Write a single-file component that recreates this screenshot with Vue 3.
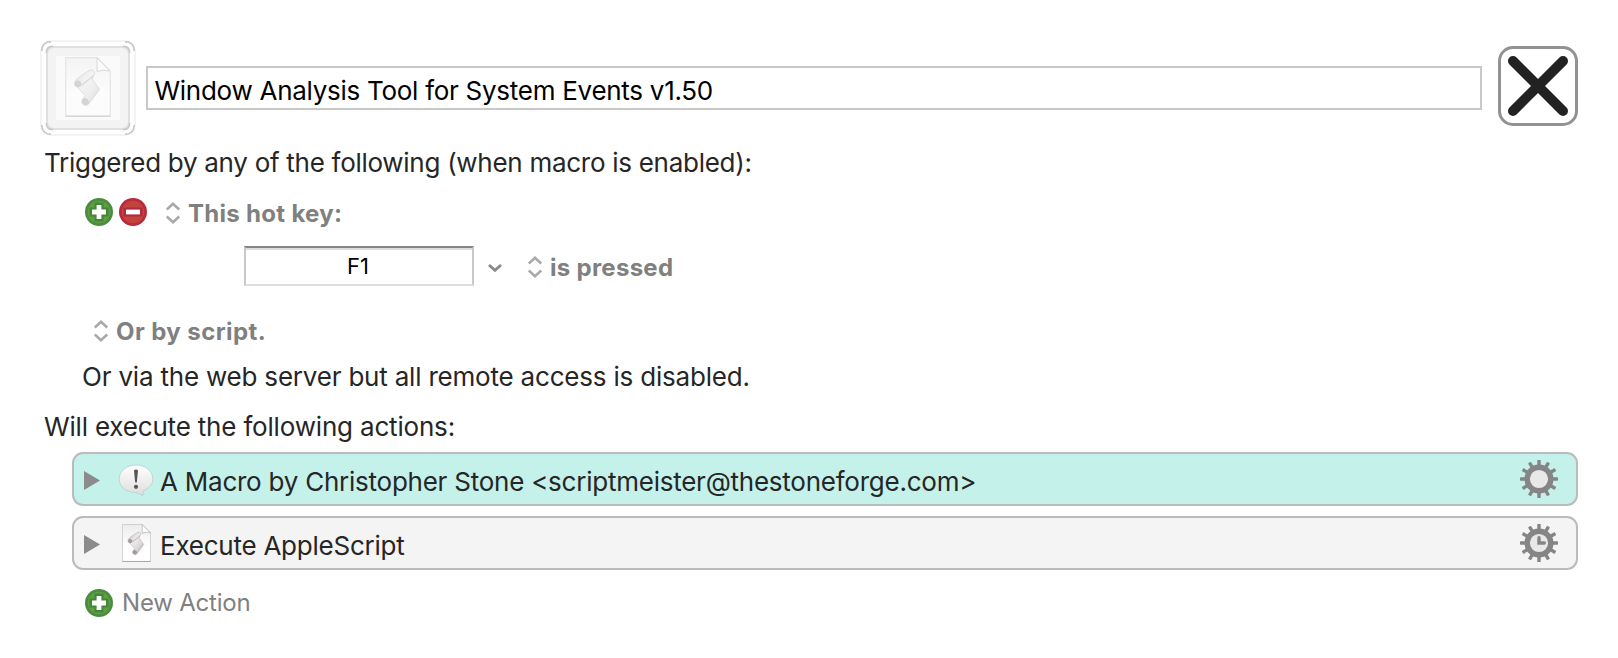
<script setup>
const teeth = Array.from({ length: 12 }, (_, i) => i * 30)
const corners = [0, 90, 180, 270]
const actions = [
  { id: 'note', title: 'A Macro by Christopher Stone <scriptmeister@thestoneforge.com>' },
  { id: 'applescript', title: 'Execute AppleScript' },
]
</script>

<template>
  <main class="editor">
    <svg width="0" height="0" class="defs">
      <defs>
        <linearGradient id="bubble" x1="0" y1="0" x2="0" y2="1">
          <stop offset="0" stop-color="#ffffff" /><stop offset="1" stop-color="#dedede" />
        </linearGradient>
        <linearGradient id="scroll" x1="0" y1="0" x2="1" y2="1">
          <stop offset="0.1" stop-color="#d0cccf" /><stop offset="0.4" stop-color="#ece9eb" /><stop offset="0.65" stop-color="#dedadc" /><stop offset="0.85" stop-color="#bbb7b9" />
        </linearGradient>
        <linearGradient id="sheet" x1="0" y1="0" x2="0" y2="1">
          <stop offset="0" stop-color="#ececec" /><stop offset="0.6" stop-color="#ffffff" />
        </linearGradient>
        <symbol id="scriptdoc" viewBox="0 0 46 60">
          <path d="M.7 .7H32L45.3 14V59.3H.7Z" fill="url(#sheet)" stroke="#c6c6c6" stroke-width="1.2" />
          <path d="M.7 59.3H45.3" stroke="#a2a2a2" stroke-width="1.4" />
          <path d="M32 .7 45 14Q38 12 32 14.500Z" fill="#fdfdfd" stroke="#a8a8a8" stroke-width="1" />
          <path d="M13 30.500Q9 29 9.500 26 10 23 13 21L24 13.500Q28 11.500 30 15L27 22 34.500 32.500 24 46.500Q21 50 17.500 47 15.500 44 19 40.500L20 38.500Z" fill="url(#scroll)" stroke="#aaa6a8" stroke-width=".8" />
          <path d="M16.500 28.500 28 19" stroke="#a9a5a7" stroke-width="1.200" />
          <path d="M9.700 27Q10 23 13.500 23.500 17.500 24.500 16 29L13 30.500Q10 30 9.700 27Z" fill="#a09c9e" />
          <path d="M17 46Q16 42 19.500 41 24 41 24 46.500 20 50 17 46Z" fill="#a09c9e" />
        </symbol>
        <symbol id="plus" viewBox="0 0 28 28">
          <circle cx="14" cy="14" r="14" fill="#4a8d3e" /><circle cx="14" cy="14" r="11.300" fill="#5f9f40" />
          <path d="M14 4.500V23.500M4.500 14H23.500" stroke="#43883a" stroke-width="9" />
          <path d="M14 7V21M7 14H21" stroke="#fff" stroke-width="4.800" />
        </symbol>
        <symbol id="updown" viewBox="0 0 14 22">
          <path d="M.8 7.500 7 1.800 13.200 7.500" fill="none" stroke="#a9a9a9" stroke-width="2.600" />
          <path d="M.8 14.500 7 20.200 13.200 14.500" fill="none" stroke="#a9a9a9" stroke-width="2.600" />
        </symbol>
      </defs>
    </svg>

    <header class="head">
      <svg class="well" width="96" height="96" viewBox="0 0 96 96">
        <rect x="1" y="1" width="94" height="94" rx="11" fill="#fff" stroke="#f3f3f3" stroke-width="2" />
        <rect x="7" y="7" width="82" height="82" rx="7" fill="#f3f3f3" stroke="#e0e0e0" stroke-width="2" />
        <rect x="16" y="16" width="64" height="64" fill="#fafafa" />
        <g v-for="c in corners" :key="c" fill="none" stroke="#c6c6c6" stroke-width="1.500" :transform="`rotate(${c} 48 48)`">
          <path d="M1.800 11Q1.800 1.800 11 1.800" /><path d="M6.300 13Q6.300 6.300 13 6.300" />
        </g>
        <use class="doc" href="#scriptdoc" x="25" y="17" width="46" height="60" />
      </svg>
      <div class="name">Window Analysis Tool for System Events v1.50</div>
      <div class="close">
        <svg width="74" height="74" viewBox="0 0 74 74"><path d="M12 12 62 62M62 12 12 62" stroke="#222" stroke-width="10" stroke-linecap="round" /></svg>
      </div>
    </header>

    <p class="line trig">Triggered by any of the following (when macro is enabled):</p>

    <div class="row hot">
      <svg width="28" height="28"><use href="#plus" /></svg>
      <svg class="minus" width="28" height="28" viewBox="0 0 28 28">
        <circle cx="14" cy="14" r="14" fill="#b72c3d" /><circle cx="14" cy="14" r="11.300" fill="#c5433f" />
        <path d="M4.500 14H23.500" stroke="#b02a40" stroke-width="9" /><path d="M7 14H21" stroke="#fff" stroke-width="4.800" />
      </svg>
      <svg class="ud" width="14" height="22"><use href="#updown" /></svg>
      <span class="menu hotkey">This hot key:</span>
    </div>

    <div class="row keyrow">
      <div class="key">F1</div>
      <svg class="chev" width="14" height="10" viewBox="0 0 14 10"><path d="M1 2 7 7.300 13 2" fill="none" stroke="#8a8a8a" stroke-width="3" /></svg>
      <svg class="ud" width="14" height="22"><use href="#updown" /></svg>
      <span class="menu pressed">is pressed</span>
    </div>

    <div class="row byscript">
      <svg class="ud" width="14" height="22"><use href="#updown" /></svg>
      <span class="menu orby">Or by script.</span>
    </div>

    <p class="line via">Or via the web server but all remote access is disabled.</p>
    <p class="line will">Will execute the following actions:</p>

    <section class="actions">
      <div v-for="a in actions" :key="a.id" class="action" :class="a.id">
        <svg class="tri" width="16" height="19" viewBox="0 0 16 19"><path d="M0 0 16 9.500 0 19Z" fill="#8b8b8b" /></svg>
        <div class="pic">
          <svg v-if="a.id === 'note'" class="bubble" width="36" height="34" viewBox="0 0 36 34">
            <path d="M18 1C8.500 1 1.200 7 1.200 15S8.500 28.500 18 28.500Q21.500 30 25 31.500 25.300 29.500 25 27C31 24.800 34.800 20.500 34.800 15 34.800 7 27.500 1 18 1Z" fill="url(#bubble)" stroke="#b5cfca" stroke-width=".8" />
            <path d="M16 6.500Q18 4.500 20 6.500L18.800 18.500H17.200Z" fill="#555" /><circle cx="18" cy="22.800" r="2.100" fill="#555" />
          </svg>
          <svg v-else width="29" height="38"><use href="#scriptdoc" /></svg>
        </div>
        <span class="title">{{ a.title }}</span>
        <svg class="gear" width="38" height="38" viewBox="-19 -19 38 38">
          <rect v-for="d in teeth" :key="d" x="-1.700" y="-19" width="3.400" height="7" rx=".6" fill="#858585" :transform="`rotate(${d})`" />
          <circle r="11.800" fill="#e8e8e8" stroke="#858585" stroke-width="5.400" />
          <path v-if="a.id === 'applescript'" d="M0-5.200V0H5.300" fill="none" stroke="#858585" stroke-width="3.400" stroke-linecap="round" />
        </svg>
      </div>
    </section>

    <div class="row new">
      <svg width="28" height="28"><use href="#plus" /></svg>
      <span class="newtext">New Action</span>
    </div>
  </main>
</template>

<style scoped>
.editor { box-sizing: border-box; width: 1618px; height: 658px; padding: 40px; background: #fff; overflow: hidden; color: #262626; font-family: Inter, "Liberation Sans", sans-serif; font-size: 26px; line-height: 32px; white-space: nowrap; }
.defs { position: absolute; }
svg { display: block; flex: none; }
.head { display: flex; height: 96px; }
.doc { opacity: .4; }
.name { box-sizing: border-box; margin: 26px 0 0 10px; width: 1336px; height: 44px; border: 2px solid #c8c8c8; padding: 7px 0 0 6.5px; color: #000; letter-spacing: -.275px; }
.close { box-sizing: border-box; margin: 6px 0 0 16px; width: 80px; height: 80px; border: 3px solid #929292; border-radius: 15px; background: #fff; }
.line { margin: 0; height: 32px; }
.row { display: flex; align-items: center; }
.menu { font-weight: 700; font-size: 24px; color: #808080; }
.trig { margin: 11px 0 0 4px; letter-spacing: -.28px; }
.hot { height: 32px; margin: 17px 0 0 45px; }
.minus { margin-left: 6px; }
.ud { margin-left: 19px; margin-top: 2px; }
.hotkey { margin-left: 8px; padding-top: 3px; letter-spacing: .3px; }
.keyrow { height: 40px; margin: 18px 0 0 204px; }
.key { box-sizing: border-box; width: 230px; height: 40px; border: 2px solid #c9c9c9; border-top-color: #858585; border-bottom-color: #dedede; box-shadow: inset 0 2px #dcdcdc; text-align: center; font-size: 22px; line-height: 37px; color: #000; padding-right: 2px; }
.chev { margin-left: 14px; margin-top: 3px; }
.keyrow .ud { margin-left: 26px; }
.pressed { margin-left: 8px; padding-top: 3px; letter-spacing: .28px; }
.byscript { height: 32px; margin: 29px 0 0 54px; }
.byscript .ud { margin-left: 0; margin-top: 0; }
.orby { margin-left: 8px; padding-top: 2px; letter-spacing: .42px; }
.via { margin: 14px 0 0 42px; letter-spacing: -.2px; }
.will { margin: 18px 0 0 4px; letter-spacing: -.18px; }
.actions { margin: 9px 0 0 32px; display: grid; gap: 10px; }
.action { box-sizing: border-box; width: 1506px; height: 54px; border: 2px solid #bbb; border-radius: 11px; display: flex; align-items: center; padding: 0 18px 0 10px; background: #f4f4f4; }
.note { background: #c4f1ea; }
.tri { margin-top: 3px; }
.pic { width: 42px; margin-left: 15px; display: flex; justify-content: center; }
.bubble { margin-top: 3px; margin-right: 1px; }
.title { margin-left: 3px; padding-top: 5px; letter-spacing: -.24px; }
.gear { margin-left: auto; }
.new { height: 32px; margin: 17px 0 0 45px; }
.newtext { font-size: 24px; margin-left: 9px; color: #808080; letter-spacing: -.2px; }
</style>

<style>
body { margin: 0; background: #fff; }
</style>
